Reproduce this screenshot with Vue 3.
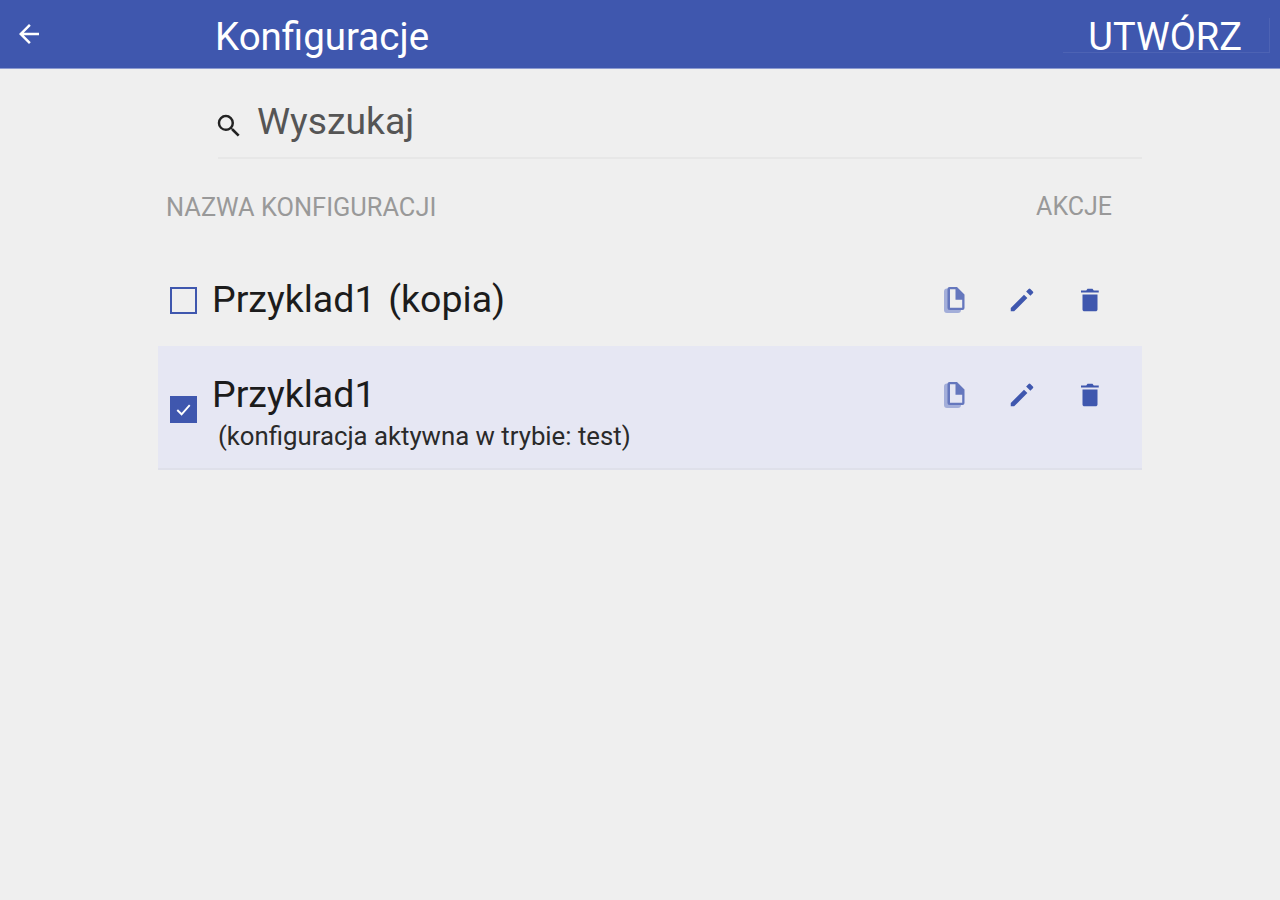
<script setup>
const rows = [
  { id: 1, name: 'Przyklad1 (kopia)', active: false },
  { id: 2, name: 'Przyklad1', note: '(konfiguracja aktywna w trybie: test)', active: true }
]
</script>

<template>
  <div class="page">
    <header class="bar">
      <svg class="back" viewBox="0 0 24 24" width="30" height="30"><path fill="#fff" d="M20 11H7.83l5.59-5.59L12 4l-8 8 8 8 1.41-1.41L7.83 13H20z"/></svg>
      <h1 class="title">Konfiguracje</h1>
      <button class="create">UTWÓRZ</button>
    </header>
    <main class="content">
      <div class="search">
        <svg class="search-icon" viewBox="0 0 24 24" width="30" height="30"><path fill="#222" d="M15.5 14h-.79l-.28-.27A6.47 6.47 0 0 0 16 9.5 6.5 6.5 0 1 0 9.5 16c1.61 0 3.09-.59 4.23-1.57l.27.28v.79l5 4.99L20.49 19l-4.99-5zm-6 0C7.01 14 5 11.99 5 9.5S7.01 5 9.5 5 14 7.01 14 9.5 11.99 14 9.5 14z"/></svg>
        <span class="search-text">Wyszukaj</span>
      </div>
      <div class="head">
        <span>NAZWA KONFIGURACJI</span>
        <span class="head-actions">AKCJE</span>
      </div>
      <div v-for="r in rows" :key="r.id" class="row" :class="{ active: r.active }">
        <span class="check" :class="{ on: r.active }">
          <svg v-if="r.active" viewBox="0 0 24 24" width="23" height="23"><path fill="none" stroke="#fff" stroke-width="2" d="M5.500 12.500l4.500 4.500 8.500-9.500"/></svg>
        </span>
        <div class="text">
          <div class="name">{{ r.name }}</div>
          <div v-if="r.note" class="note">{{ r.note }}</div>
        </div>
        <div class="actions">
          <svg class="copy" viewBox="0 0 24 28" width="24" height="28">
            <path fill="#a3aed9" d="M2 5.500A3 3 0 0 1 5 2.500h2V24h12a3 3 0 0 1-3 3H5a3 3 0 0 1-3-3z"/>
            <path fill="#6577bd" fill-rule="evenodd" d="M7.500 1H15l7.500 7.500V22a2 2 0 0 1-2 2H7.500a2 2 0 0 1-2-2V3a2 2 0 0 1 2-2zM8 3.300V21.700h12.200V13.800H13.500V3.300z"/>
          </svg>
          <svg class="pencil" viewBox="0 0 24 24" width="30" height="30"><path fill="#3f57ae" d="M3 18.300V21h2.700L16.300 10.400l-2.700-2.700L3 18.300zM20.700 6.500a1 1 0 0 0 0-1.400l-2-2a1 1 0 0 0-1.400 0l-2 2 3.400 3.400z"/></svg>
          <svg class="trash" viewBox="0 0 24 24" width="30" height="30"><path fill="#3f57ae" d="M6 19.500c0 .9.700 1.500 1.500 1.500h9c.800 0 1.500-.6 1.500-1.500V7.500H6zM19 4.300h-4l-1-1.300h-4L9 4.300H4.800V6h14.200z"/></svg>
        </div>
      </div>
    </main>
  </div>
</template>

<style>
html, body { margin: 0; background: #efefef; }
</style>

<style scoped>
.page {
  width: 1280px;
  height: 900px;
  background: #efefef;
  font-family: Roboto, "Liberation Sans", sans-serif;
  overflow: hidden;
}
.bar {
  height: 68px;
  background: #3f57ae;
  border-bottom: 1px solid #8c9ad0;
  display: flex;
  align-items: center;
  padding-left: 14px;
}
.back { flex: none; }
.title {
  margin: 4px 0 0 171px;
  font-size: 38.500px;
  font-weight: 400;
  color: #fff;
  flex: 1;
}
.create {
  align-self: flex-start;
  margin: 18px 10px 0 0;
  width: 207px;
  height: 35px;
  padding: 1px 27px 0 0;
  background: none;
  border: 0;
  border-right: 1px solid #4d63b4;
  border-bottom: 1px solid #4d63b4;
  color: #fff;
  font: 400 38px/37px Roboto, sans-serif;
  text-align: right;
  white-space: nowrap;
}
.content {
  width: 984px;
  margin-left: 158px;
}
.search {
  margin-left: 60px;
  height: 90px;
  box-sizing: border-box;
  border-bottom: 2px solid #e7e7e7;
  display: flex;
  align-items: flex-start;
  padding-top: 30px;
  color: #555;
}
.search-icon { margin: 12px 13px 0 -4px; flex: none; }
.search-text { font-size: 37.300px; line-height: 44px; }
.head {
  display: flex;
  justify-content: space-between;
  padding: 33px 30px 0 8px;
  height: 60px;
  font-size: 25.400px;
  color: #999;
  line-height: 30px;
}
.head-actions { font-size: 25px; }
.row {
  display: flex;
  align-items: center;
  padding: 2px 0 0 12px;
  height: 94px;
  box-sizing: border-box;
}
.row.active {
  height: 124px;
  padding-top: 0;
  background: #e6e7f3;
  border-bottom: 2px solid #dfe0ea;
  align-items: flex-start;
}
.check {
  width: 23px;
  height: 23px;
  border: 2px solid #3f57ae;
  flex: none;
  display: flex;
  align-items: center;
  justify-content: center;
}
.check.on {
  background: #3f57ae;
  margin-top: 50px;
}
.text { margin: 0 0 2px 15px; flex: 1; }
.active .text { margin-top: 26px; }
.name {
  font-size: 37.500px;
  line-height: 44px;
  word-spacing: 3.500px;
  color: #1c1c1c;
}
.note {
  font-size: 25.750px;
  line-height: 30px;
  color: #2a2a2a;
  margin: 5px 0 0 6px;
}
.actions {
  display: flex;
  align-items: center;
  padding-right: 37px;
}
.copy { margin-right: 41px; }
.pencil { margin-right: 38px; }
.active .actions { margin-top: 34px; }
</style>
